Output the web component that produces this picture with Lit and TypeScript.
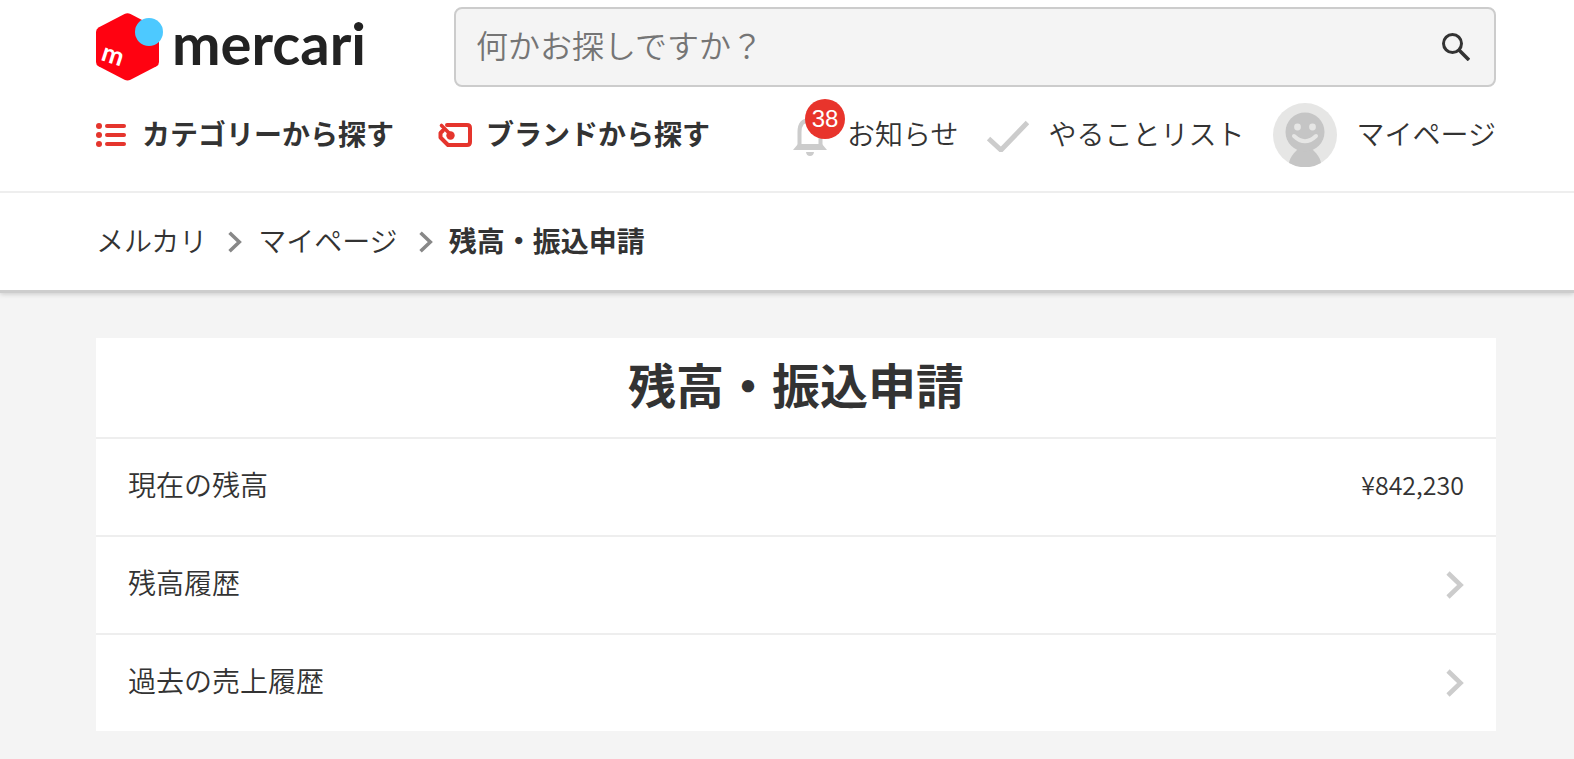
import { LitElement, html, css, svg } from "lit";
import { customElement } from "lit/decorators.js";

const chevron = (cls: string) => html`
  <svg class=${cls} viewBox="0 0 18 28" aria-hidden="true">
    <path d="M2 2 L14.5 14 L2 26" fill="none" stroke="currentColor" stroke-width="4.6" />
  </svg>
`;

const face = svg`
  <circle cx="32" cy="32" r="32" fill="#e6e6e5" />
  <path d="M16 60 C17 54 21 50 25 46 H39 C43 50 47 54 48 60 A32 32 0 0 1 16 60 Z" fill="#c5c5c5" />
  <circle cx="32" cy="29" r="19.5" fill="#c5c5c5" />
  <circle cx="24.5" cy="24" r="3.4" fill="#e6e6e5" />
  <circle cx="39.5" cy="24" r="3.4" fill="#e6e6e5" />
  <path d="M21 33 Q32 43.5 43 33" fill="none" stroke="#e6e6e5" stroke-width="4" stroke-linecap="round" />
`;

@customElement("app-root")
export class AppRoot extends LitElement {
  static styles = css`
    :host {
      display: block;
      min-height: 100vh;
      background: #f4f4f4;
      color: #333;
      font-family: "Noto Sans CJK JP", sans-serif;
      font-size: 28px;
      font-weight: 350;
      line-height: 40px;
    }
    * {
      box-sizing: border-box;
    }
    a {
      color: inherit;
      text-decoration: none;
    }
    svg {
      display: block;
      flex: none;
    }
    .page-head {
      background: #fff;
      box-shadow: 0 3px 0 #cdcdcd, 0 4px 5px rgba(0, 0, 0, 0.18);
    }
    .wrap {
      padding-left: 96px;
      padding-right: 78px;
    }
    .top {
      padding-top: 7px;
      padding-bottom: 24px;
      border-bottom: 2px solid #eee;
    }
    .brand-row {
      display: flex;
      align-items: center;
      gap: 88px;
    }
    .logo {
      display: flex;
      align-items: center;
      gap: 8px;
      width: 270px;
      flex: none;
    }
    .mark {
      width: 68px;
      height: 68px;
    }
    .mark-letter {
      font: 700 26px Lato, sans-serif;
    }
    .wordmark {
      padding-bottom: 8px;
      font: 700 58px/60px Lato, sans-serif;
      color: #222;
    }
    .search {
      display: flex;
      align-items: center;
      flex: 1;
      min-width: 0;
      height: 80px;
      padding: 0 24px 0 20px;
      border: 2px solid #ccc;
      border-radius: 8px;
      background: #f4f4f4;
    }
    .search-input {
      flex: 1;
      min-width: 0;
      height: 56px;
      padding: 0 0 6px;
      border: 0;
      outline: 0;
      background: none;
      color: #333;
      font: inherit;
      font-size: 32px;
    }
    .search-input::placeholder {
      color: #757575;
      opacity: 1;
    }
    .search-button {
      padding: 0;
      border: 0;
      background: none;
      color: #333;
      cursor: pointer;
    }
    .search-icon {
      width: 28px;
      height: 28px;
    }
    .label {
      padding-bottom: 4px;
    }
    .nav-row {
      display: flex;
      align-items: center;
      justify-content: space-between;
      height: 64px;
      margin-top: 16px;
      white-space: nowrap;
    }
    .finders {
      display: flex;
      gap: 44px;
      font-weight: 700;
    }
    .finder {
      display: flex;
      align-items: center;
      gap: 14px;
    }
    .finder-icon {
      color: #e5352d;
    }
    .list-icon {
      width: 32px;
      height: 26px;
    }
    .tag-icon {
      width: 34px;
      height: 26px;
    }
    .account {
      display: flex;
      gap: 28px;
    }
    .account-link {
      display: flex;
      align-items: center;
      gap: 20px;
    }
    .bell {
      position: relative;
    }
    .bell-icon {
      width: 34px;
      height: 42px;
    }
    .badge {
      position: absolute;
      left: 12px;
      top: -15px;
      width: 40px;
      height: 40px;
      border-radius: 50%;
      background: #e8342c;
      color: #fff;
      font: 400 24px/40px "Liberation Sans", sans-serif;
      text-align: center;
    }
    .check-icon {
      width: 42px;
      height: 34px;
    }
    .avatar {
      width: 64px;
      height: 64px;
    }
    .crumbs {
      display: flex;
      align-items: center;
      gap: 16px;
      height: 97px;
      margin: 0;
      list-style: none;
    }
    .crumb {
      display: flex;
      align-items: center;
      gap: 21px;
    }
    .crumb-arrow {
      width: 14px;
      height: 22px;
      color: #888;
    }
    .current {
      font-weight: 700;
    }
    .content {
      padding-top: 48px;
      padding-bottom: 28px;
    }
    .card {
      background: #fff;
    }
    .title {
      margin: 0;
      padding: 10px 32px 18px;
      font-size: 48px;
      font-weight: 700;
      line-height: 71px;
      text-align: center;
    }
    .rows {
      margin: 0;
      padding: 0;
      list-style: none;
    }
    .row {
      display: flex;
      align-items: center;
      justify-content: space-between;
      height: 98px;
      padding: 0 32px;
      border-top: 2px solid #eee;
    }
    .row-text {
      padding-bottom: 6px;
    }
    .amount {
      font-size: 25px;
    }
    .row-arrow {
      width: 18px;
      height: 28px;
      color: #ccc;
    }
  `;

  render() {
    return html`
      <header class="page-head">
        <div class="top wrap">
          <div class="brand-row">
            <a class="logo" href="#" aria-label="mercari">
              <svg class="mark" viewBox="0 0 68 68" aria-hidden="true">
                <path
                  d="M28.5 1 Q31.500 -0.500 34.500 1 L60.500 14.500 Q63 16 63 19 V49 Q63 52 60.500 53.300 L34.500 66.700 Q31.500 68.200 28.500 66.700 L2.500 53.300 Q0 52 0 49 V19 Q0 16 2.500 14.500 Z"
                  fill="#ff0211"
                />
                <circle cx="53" cy="19" r="14" fill="#4dc9ff" />
                <text class="mark-letter" x="4" y="47" fill="#fff" transform="rotate(18 5 47)">m</text>
              </svg>
              <span class="wordmark">mercari</span>
            </a>
            <form class="search" role="search" @submit=${(e: Event) => e.preventDefault()}>
              <input class="search-input" type="search" aria-label="検索" placeholder="何かお探しですか？" />
              <button class="search-button" type="submit" aria-label="検索">
                <svg class="search-icon" viewBox="0 0 28 28" aria-hidden="true">
                  <g fill="none" stroke="currentColor" stroke-width="3">
                    <circle cx="10.500" cy="10.500" r="9" />
                    <path d="M17 17 L27 27" stroke-width="3.600" />
                  </g>
                </svg>
              </button>
            </form>
          </div>
          <div class="nav-row">
            <nav class="finders">
              <a class="finder" href="#">
                <svg class="finder-icon list-icon" viewBox="0 0 32 26" aria-hidden="true">
                  <g fill="currentColor">
                    <circle cx="3" cy="4" r="3" />
                    <circle cx="3" cy="13" r="3" />
                    <circle cx="3" cy="22" r="3" />
                    <rect x="9" y="2" width="21" height="4" rx="2" />
                    <rect x="9" y="11" width="21" height="4" rx="2" />
                    <rect x="9" y="20" width="21" height="4" rx="2" />
                  </g>
                </svg>
                <span class="label">カテゴリーから探す</span>
              </a>
              <a class="finder" href="#">
                <svg class="finder-icon tag-icon" viewBox="0 0 34 26" aria-hidden="true">
                  <g fill="none" stroke="currentColor" stroke-width="4" stroke-linejoin="round" stroke-linecap="round">
                    <path d="M9 3 H29 Q32 3 32 6 V20 Q32 23 29 23 H10 L2.500 15.500 V11 L5 8.500" />
                    <path d="M3.500 3.500 L13 13" stroke-width="3.600" />
                  </g>
                  <circle cx="12.500" cy="13.500" r="4.200" fill="currentColor" />
                </svg>
                <span class="label">ブランドから探す</span>
              </a>
            </nav>
            <nav class="account">
              <a class="account-link" href="#">
                <span class="bell">
                  <svg class="bell-icon" viewBox="0 0 34 42" aria-hidden="true">
                    <path
                      d="M6.500 33 V18 C6.500 9 11 6 17 6 C23 6 27.500 9 27.500 18 V33"
                      fill="none" stroke="#ccc" stroke-width="4"
                    />
                    <path d="M5 30 H29 L34 36 H0 Z M13 38 H21 Q20.500 42 17 42 Q13.500 42 13 38 Z" fill="#ccc" />
                  </svg>
                  <span class="badge">38</span>
                </span>
                <span class="label">お知らせ</span>
              </a>
              <a class="account-link" href="#">
                <svg class="check-icon" viewBox="0 0 42 34" aria-hidden="true">
                  <path d="M1.500 20.500 L14 32 L40.500 4.500" fill="none" stroke="#ccc" stroke-width="5" />
                </svg>
                <span class="label">やることリスト</span>
              </a>
              <a class="account-link" href="#">
                <svg class="avatar" viewBox="0 0 64 64" aria-hidden="true">${face}</svg>
                <span class="label">マイページ</span>
              </a>
            </nav>
          </div>
        </div>
        <nav>
          <ol class="crumbs wrap">
            <li class="crumb"><a class="label" href="#">メルカリ</a>${chevron("crumb-arrow")}</li>
            <li class="crumb"><a class="label" href="#">マイページ</a>${chevron("crumb-arrow")}</li>
            <li class="crumb current" aria-current="page"><span class="label">残高・振込申請</span></li>
          </ol>
        </nav>
      </header>
      <main class="content wrap">
        <section class="card">
          <h1 class="title">残高・振込申請</h1>
          <ul class="rows">
            <li class="row">
              <span class="row-text">現在の残高</span>
              <span class="row-text amount">¥842,230</span>
            </li>
            <li><a class="row" href="#"><span class="row-text">残高履歴</span>${chevron("row-arrow")}</a></li>
            <li><a class="row" href="#"><span class="row-text">過去の売上履歴</span>${chevron("row-arrow")}</a></li>
          </ul>
        </section>
      </main>
    `;
  }
}
